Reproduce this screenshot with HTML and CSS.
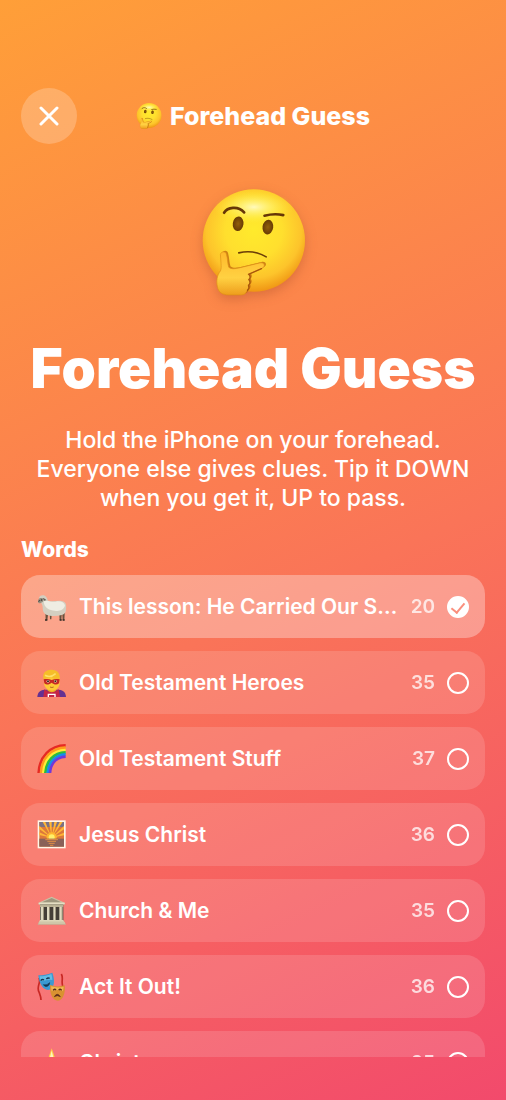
FILE: index.html
```html
<!DOCTYPE html>
<html lang="en">
<head>
<meta charset="UTF-8">
<meta name="viewport" content="width=device-width, initial-scale=1.0">
<title>Forehead Guess</title>
<link rel="stylesheet" href="styles.css">
</head>
<body>

<!-- shared thinking face -->
<svg class="defs" aria-hidden="true">
  <defs>
    <radialGradient id="face" cx="0.5" cy="0.4" r="0.62">
      <stop offset="0" stop-color="#ffea2c"/>
      <stop offset="0.45" stop-color="#ffdf2e"/>
      <stop offset="0.75" stop-color="#fdc42b"/>
      <stop offset="1" stop-color="#ee8f10"/>
    </radialGradient>
    <radialGradient id="shine">
      <stop offset="0" stop-color="#fffbc4" stop-opacity="0.95"/>
      <stop offset="1" stop-color="#fff02e" stop-opacity="0"/>
    </radialGradient>
    <linearGradient id="hand" x1="0" y1="0" x2="0" y2="1">
      <stop offset="0" stop-color="#ffb92b"/>
      <stop offset="0.6" stop-color="#ffd142"/>
      <stop offset="1" stop-color="#ee9d1c"/>
    </linearGradient>
    <radialGradient id="eye">
      <stop offset="0" stop-color="#925f0b"/>
      <stop offset="1" stop-color="#683b05"/>
    </radialGradient>
  </defs>
  <symbol id="thinking" viewBox="57 58 320 320">
    <circle cx="218" cy="212" r="153" fill="url(#face)"/>
    <ellipse cx="218" cy="112" rx="120" ry="50" fill="url(#shine)"/>
    <ellipse cx="171" cy="162" rx="16" ry="22" fill="url(#eye)" transform="rotate(8 171 162)"/>
    <ellipse cx="260" cy="172" rx="16" ry="22" fill="url(#eye)" transform="rotate(8 260 172)"/>
    <path d="M129 129c10-16 41-22 60-1" fill="none" stroke="#663607" stroke-width="8" stroke-linecap="round"/>
    <path d="M250 138c18-5 38-6 56-2" fill="none" stroke="#663607" stroke-width="8" stroke-linecap="round"/>
    <path d="M173 249c29-7 60-1 82 12" fill="none" stroke="#6b3d08" stroke-width="5" stroke-linecap="round"/>
    <path d="M118 254c2-10 15-11 18-1 4 14 3 26 7 39 9 7 20 4 31 2l62-15c15-3 18 12 5 17l-39 17c7 4 6 12 1 16 5 5 5 13-1 17 3 6 1 11-3 15l-3 4c-3 8-10 10-22 10h-29c-22 0-33-8-36-25-4-16-1-35 9-47 4-8 2-18 0-49z" fill="#b9600c" opacity="0.7" transform="translate(5 -3)"/>
    <path d="M118 254c2-10 15-11 18-1 4 14 3 26 7 39 9 7 20 4 31 2l62-15c15-3 18 12 5 17l-39 17c7 4 6 12 1 16 5 5 5 13-1 17 3 6 1 11-3 15l-3 4c-3 8-10 10-22 10h-29c-22 0-33-8-36-25-4-16-1-35 9-47 4-8 2-18 0-49z" fill="url(#hand)" stroke="#e08f17" stroke-width="2"/>
    <path d="M241 296l-39 17c7 4 6 12 1 16 5 5 5 13-1 17 3 6 1 11-3 15" fill="none" stroke="#a8560c" stroke-width="4" stroke-linecap="round" stroke-linejoin="round"/>
  </symbol>
</svg>

<main class="screen">
  <header class="top-bar">
    <button class="close" type="button" aria-label="Close">
      <svg viewBox="0 0 20 20" aria-hidden="true"><path d="M2 2l16 16M18 2L2 18"/></svg>
    </button>
    <div class="top-title">
      <svg class="top-emoji" aria-hidden="true"><use href="#thinking"/></svg>
      <span>Forehead Guess</span>
    </div>
  </header>

  <svg class="hero" aria-hidden="true"><use href="#thinking"/></svg>
  <h1>Forehead Guess</h1>
  <p class="intro">Hold the iPhone on your forehead. Everyone else gives clues. Tip it DOWN when you get it, UP to pass.</p>

  <h2>Words</h2>
  <div class="decks">
    <label class="deck">
      <svg class="icon" viewBox="51 36 90 90" aria-hidden="true">
        <path d="M76 88l1 33h5l4-33M89 90l1 28h4l2-28M117 90l2 31h5l2-32M126 84l2 37h5l2-40" fill="#66513d"/>
        <path d="M75 120h7M119 120h6M128 120h6" stroke="#342b25" stroke-width="4"/>
        <path d="M57 56c0-11 14-13 21-6 4 4 4 10 8 13 12 3 26-2 38 0 13 1 16 10 14 24 0 11-4 16-13 18-16 4-34 4-46-1-9-4-11-14-11-23 0-7-5-14-11-25z" fill="#d3cfc1"/>
        <path d="M71 64c14-3 24 3 36 1 13-3 25 1 28 11-3 15-18 19-31 16-14-1-32-6-33-28z" fill="#efede3"/>
        <path d="M55 59c2-5 7-6 13-4l4 2-3 8-7 4c-4 2-7 0-8-3z" fill="#978f80"/>
        <path d="M55 64l6-3M70 56l6 3-2 3" fill="none" stroke="#3f3934" stroke-width="3"/>
        <circle cx="65" cy="60" r="2" fill="#222"/>
      </svg>
      <span class="name">This lesson: He Carried Our Sorrows</span>
      <span class="count">20</span>
      <input type="radio" name="deck" checked>
    </label>

    <label class="deck">
      <svg class="icon" viewBox="51 39 90 90" aria-hidden="true">
        <path d="M52 126c1-13 6-20 22-22h42c16 2 21 9 22 22z" fill="#653191"/>
        <path d="M70 126l3-23c13 10 30 10 43 0l4 23z" fill="#c52546"/>
        <path d="M82 97h27v9c-7 8-20 8-27 0z" fill="#efab22"/>
        <path d="M72 74c0-17 10-24 24-24s23 7 23 24v10c0 13-11 23-23 23s-24-10-24-23z" fill="#ffc936"/>
        <path d="M71 74c-6-20 7-31 24-30 16 0 29 12 22 31-9 0-15-3-23-9-7 5-16 3-23 8z" fill="#f6bd29"/>
        <path d="M75 61c11 6 24 2 32-5" fill="none" stroke="#ffdf68" stroke-width="5"/>
        <path d="M71 73c8-2 16-2 24 2 8-4 16-4 24-2l-2 12c-7 6-15 4-22-2-7 6-16 8-22 2z" fill="#c52825"/>
        <circle cx="84" cy="79" r="4" fill="#fff1cd"/>
        <circle cx="106" cy="79" r="4" fill="#fff1cd"/>
        <circle cx="84" cy="79" r="3" fill="#352015"/>
        <circle cx="106" cy="79" r="3" fill="#352015"/>
        <path d="M90 96q6 3 11 0" fill="none" stroke="#b66b20" stroke-width="3"/>
        <path d="M85 126v-8h20v8" fill="none" stroke="#fff" stroke-width="4"/>
      </svg>
      <span class="name">Old Testament Heroes</span>
      <span class="count">35</span>
      <input type="radio" name="deck">
    </label>

    <label class="deck">
      <svg class="icon" viewBox="51 42 90 90" aria-hidden="true">
        <g fill="none" stroke-width="8">
          <path d="M56 129c2-49 34-82 81-83" stroke="#e62a24"/>
          <path d="M63 129c2-44 31-75 74-76" stroke="#ff9c1c"/>
          <path d="M70 129c2-40 28-68 67-69" stroke="#ffed35"/>
          <path d="M76 129c3-36 24-61 61-62" stroke="#29bd40"/>
          <path d="M83 129c2-31 22-54 54-56" stroke="#168dec"/>
          <path d="M90 129c2-27 18-47 47-49" stroke="#7038d9"/>
        </g>
      </svg>
      <span class="name">Old Testament Stuff</span>
      <span class="count">37</span>
      <input type="radio" name="deck">
    </label>

    <label class="deck">
      <svg class="icon" viewBox="51 45 90 90" aria-hidden="true">
        <path d="M53 46h84v84H53z" fill="#fff7e8"/>
        <path d="M58 51h74v74H58z" fill="#dc783b"/>
        <path d="M58 51h74v15H58z" fill="#7c7085"/>
        <path d="M95 98L58 62v10zM95 98L68 51h8zM95 98L87 51h8zM95 98l8-47h8zM95 98l24-47h9zM95 98l37-35v10zM95 98L58 82v8zM95 98l37-15v8z" fill="#ffb637"/>
        <circle cx="95" cy="97" r="15" fill="#ffb62e"/>
        <circle cx="95" cy="97" r="9" fill="#fff06a"/>
        <path d="M58 101h74v24H58z" fill="#8a6158"/>
        <path d="M76 104h38M82 109h26M86 115h18M90 121h10" stroke="#e28e44" stroke-width="3"/>
      </svg>
      <span class="name">Jesus Christ</span>
      <span class="count">36</span>
      <input type="radio" name="deck">
    </label>

    <label class="deck">
      <svg class="icon" viewBox="51 47 90 90" aria-hidden="true">
        <path d="M60 69h70v57H60z" fill="#443e36"/>
        <path d="M56 67l39-18 39 18v6H56z" fill="#c9c2a5"/>
        <path d="M66 66l29-13 29 13z" fill="#9d967e"/>
        <path d="M56 69h78" stroke="#e5dfc4" stroke-width="4"/>
        <path d="M60 74h70v6H60z" fill="#b9b194"/>
        <path d="M62 79h9v42h-9zM81 79h7v42h-7zM100 79h7v42h-7zM118 79h9v42h-9z" fill="#dfd9bf"/>
        <path d="M69 79h3v42h-3zM87 79h2v42h-2zM106 79h2v42h-2zM125 79h3v42h-3z" fill="#9b947b"/>
        <path d="M60 119h70l3 6H57z" fill="#ddd6b9"/>
        <path d="M57 124h77l4 9H53z" fill="#bfb698"/>
        <path d="M56 128h79" stroke="#eee6ca" stroke-width="2"/>
      </svg>
      <span class="name">Church &amp; Me</span>
      <span class="count">35</span>
      <input type="radio" name="deck">
    </label>

    <label class="deck">
      <svg class="icon" viewBox="51 48 90 90" aria-hidden="true">
        <path d="M57 66c7 16-9 25 0 42 3 8 6 14 6 24M124 54c7 13-1 21 4 36" fill="none" stroke="#c82824" stroke-width="5"/>
        <path d="M55 58c13 0 27-2 42-8 7 20 8 40-5 49-15 10-33-7-37-41z" fill="#3c99d2"/>
        <path d="M59 61c12 0 24-2 35-7 2 6 3 13 3 18-14-3-24 2-36 4z" fill="#65bce4"/>
        <path d="M62 74q5-6 10-2M79 69q5-5 10-2" fill="none" stroke="#153653" stroke-width="4"/>
        <path d="M70 86q12 3 19-6c-1 12-13 15-19 6z" fill="#153653" stroke="#153653" stroke-width="2"/>
        <path d="M90 87c15 5 28 6 44 1 3 19-4 46-20 46-18 0-25-23-24-47z" fill="#d99131"/>
        <path d="M93 91c14 4 25 4 38 1l-2 14c-10-5-24-5-34 0z" fill="#f3b653"/>
        <path d="M99 103q5-6 9-1M116 102q5-5 9 1" fill="none" stroke="#5a2919" stroke-width="4"/>
        <path d="M103 122q9-14 18 0-9-6-18 0z" fill="#5a2919" stroke="#5a2919" stroke-width="2"/>
      </svg>
      <span class="name">Act It Out!</span>
      <span class="count">36</span>
      <input type="radio" name="deck">
    </label>

    <label class="deck">
      <svg class="icon" viewBox="0 0 90 90" aria-hidden="true">
        <path d="M44 1l9 26 31 1-24 19 10 30-26-17-26 17 10-30L4 28l31-1z" fill="#ffce45"/>
        <path d="M44 8l6 23 24 1-20 15 8 22-18-13-18 13 8-22-20-15 24-1z" fill="#fff5bd"/>
      </svg>
      <span class="name">Christmas</span>
      <span class="count">35</span>
      <input type="radio" name="deck">
    </label>
  </div>
</main>

</body>
</html>
```
FILE: styles.css
```css
* {
  box-sizing: border-box;
}

body {
  margin: 0;
  font-family: Inter, "Liberation Sans", sans-serif;
  color: white;
}

.defs {
  position: absolute;
  width: 0;
  height: 0;
}

.screen {
  display: flex;
  flex-direction: column;
  height: 100vh;
  padding: 88px 21px 43px;
  background: linear-gradient(155deg, #ff9f38, #fa7458 55%, #f24a6c);
}

.top-bar {
  display: grid;
  grid-template-columns: 56px 1fr 56px;
  align-items: center;
}

.close {
  display: flex;
  align-items: center;
  justify-content: center;
  width: 56px;
  height: 56px;
  padding: 0;
  border: none;
  border-radius: 50%;
  background: rgba(255, 255, 255, 0.22);
  cursor: pointer;
}

.close svg {
  width: 20px;
  height: 20px;
  fill: none;
  stroke: white;
  stroke-width: 3;
  stroke-linecap: round;
}

.top-title {
  display: flex;
  align-items: center;
  justify-content: center;
  gap: 8px;
  font-size: 25px;
  font-weight: 800;
  white-space: nowrap;
}

.top-emoji {
  width: 26px;
  height: 26px;
}

.hero {
  flex-shrink: 0;
  align-self: center;
  width: 107px;
  height: 107px;
  margin-top: 45px;
  filter: drop-shadow(0 4px 6px rgba(120, 40, 20, 0.25));
}

h1 {
  margin: 40px 0 0;
  font-size: 55px;
  font-weight: 900;
  line-height: 64px;
  text-align: center;
  white-space: nowrap;
}

.intro {
  margin: 26px 8px 0;
  font-size: 23px;
  font-weight: 500;
  line-height: 29px;
  text-align: center;
}

h2 {
  margin: 24px 0 12px;
  font-size: 21px;
  font-weight: 800;
  line-height: 26px;
}

.decks {
  display: flex;
  flex: 1;
  flex-direction: column;
  gap: 13px;
  min-height: 0;
  overflow: hidden;
}

.deck {
  display: flex;
  flex-shrink: 0;
  align-items: center;
  gap: 12px;
  height: 63px;
  padding: 0 16px;
  border-radius: 19px;
  background: rgba(255, 255, 255, 0.14);
  cursor: pointer;
}

.deck:has(input:checked) {
  background: rgba(255, 255, 255, 0.32);
}

.icon {
  flex-shrink: 0;
  width: 30px;
  height: 30px;
}

.name {
  flex: 1;
  overflow: hidden;
  font-size: 21px;
  font-weight: 600;
  line-height: 28px;
  text-overflow: ellipsis;
  white-space: nowrap;
}

.count {
  font-size: 19px;
  font-weight: 600;
  opacity: 0.75;
}

.deck input {
  display: flex;
  flex-shrink: 0;
  justify-content: center;
  width: 22px;
  height: 22px;
  margin: 0;
  border: 2px solid white;
  border-radius: 50%;
  appearance: none;
}

.deck input:checked {
  background: white;
}

.deck input:checked::after {
  content: "";
  width: 6px;
  height: 11px;
  margin-top: 2px;
  border: solid #fa8f7d;
  border-width: 0 2px 2px 0;
  transform: rotate(40deg);
}
```
